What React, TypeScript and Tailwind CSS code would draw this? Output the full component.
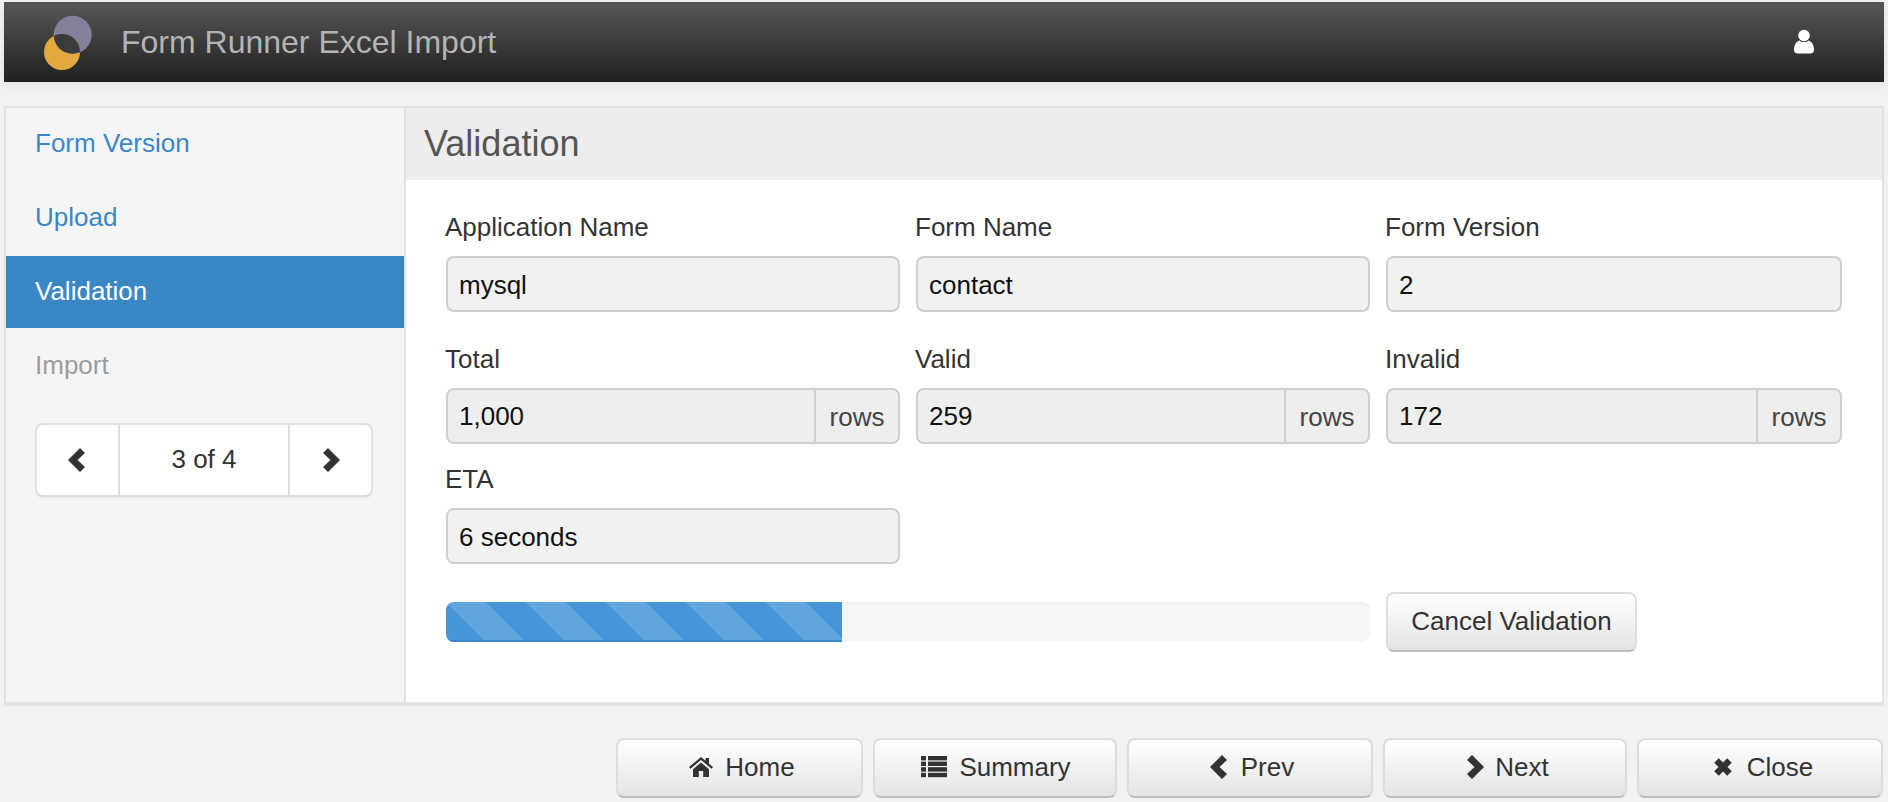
import type { ReactNode } from "react";

function Logo() {
  return (
    <svg width="60" height="60" viewBox="0 0 60 60" className="shrink-0">
      <defs>
        <clipPath id="lens">
          <circle cx="32.7" cy="22.7" r="19" />
        </clipPath>
      </defs>
      <circle cx="22" cy="40" r="18" fill="#e3a83f" />
      <circle cx="32.7" cy="22.7" r="19" fill="#84809a" />
      <circle cx="22" cy="40" r="18" fill="#3b3b3b" clipPath="url(#lens)" />
    </svg>
  );
}

function UserIcon() {
  return (
    <svg width="20" height="26" viewBox="0 0 20 26" fill="#fff">
      <circle cx="10" cy="6.5" r="5.8" />
      <path d="M0 20.5C0 15.5 2.5 12.5 5.5 11.5C7 13.6 13 13.6 14.5 11.5C17.5 12.5 20 15.5 20 20.5C20 23.2 18.6 24.5 16.5 24.5H3.5C1.4 24.5 0 23.2 0 20.5Z" />
    </svg>
  );
}

function ChevronLeft({ blur }: { blur?: boolean }) {
  return (
    <svg width="17" height="24" viewBox="0 0 17 24" fill="#333" className={blur ? "blur-[0.6px]" : ""}>
      <polygon points="12,0 17,5 9.5,12 17,19 12,24 0,12" />
    </svg>
  );
}

function ChevronRight({ blur }: { blur?: boolean }) {
  return (
    <svg width="17" height="24" viewBox="0 0 17 24" fill="#333" className={blur ? "blur-[0.6px]" : ""}>
      <polygon points="5,0 0,5 7.5,12 0,19 5,24 17,12" />
    </svg>
  );
}

function HomeIcon() {
  return (
    <svg width="24" height="20" viewBox="0 0 24 20" fill="#333">
      <polygon points="0,10 12,0 16.5,3.8 16.5,1 20,1 20,6.8 24,10 22.5,11.8 12,3 1.5,11.8" />
      <polygon points="4,12.2 12,5.4 20,12.2 20,20 14.2,20 14.2,14 9.8,14 9.8,20 4,20" />
    </svg>
  );
}

function ListIcon() {
  return (
    <svg width="26" height="22" viewBox="0 0 26 22" fill="#333">
      <rect x="0" y="0" width="5" height="4.4" />
      <rect x="7" y="0" width="19" height="4.4" />
      <rect x="0" y="5.6" width="5" height="4.4" />
      <rect x="7" y="5.6" width="19" height="4.4" />
      <rect x="0" y="11.2" width="5" height="4.4" />
      <rect x="7" y="11.2" width="19" height="4.4" />
      <rect x="0" y="16.8" width="5" height="4.4" />
      <rect x="7" y="16.8" width="19" height="4.4" />
    </svg>
  );
}

function CloseIcon() {
  return (
    <svg width="18" height="18" viewBox="0 0 18 18" stroke="#333" strokeWidth="6.4">
      <path d="M2.5 2.5L15.5 15.5M15.5 2.5L2.5 15.5" />
    </svg>
  );
}

function Field({ label, value, rows, top }: { label: string; value: string; rows?: boolean; top?: boolean }) {
  return (
    <div>
      <div className="mb-[14px] -ml-[1px] h-[30px] text-[26px] leading-[30px] text-[#333]">{label}</div>
      <div
        className={`flex h-[56px] items-center rounded-[8px] border-2 border-[#cfcfcf] text-[26px] text-[#111] ${
          top ? "bg-[#f1f1f1]" : "bg-[#eeeeee]"
        }`}
      >
        <div className={`flex-1 pl-[11px] ${top ? "pt-[3px]" : "pt-[1px]"}`}>{value}</div>
        {rows && (
          <div className="flex h-full w-[84px] items-center justify-center border-l-2 border-[#cfcfcf] pt-[3px] text-[#444]">
            rows
          </div>
        )}
      </div>
    </div>
  );
}

function FooterButton({ icon, text, className }: { icon: ReactNode; text: string; className: string }) {
  return (
    <button
      className={`flex h-[60px] items-center justify-center rounded-[8px] border-2 border-[#dddddd] border-b-[#bdbdbd] bg-linear-to-b from-[#ffffff] to-[#e4e4e4] pb-[2px] text-[26px] text-[#333] ${className}`}
    >
      {icon}
      <span>{text}</span>
    </button>
  );
}

export default function App() {
  return (
    <div className="min-h-[802px] bg-[#f2f2f2] px-[4px] pt-[2px] font-['Liberation_Sans',Arial,sans-serif]">
      <header className="flex h-[80px] items-center bg-linear-to-b from-[#585858] to-[#212121] pl-[36px] pr-[70px] shadow-[0_3px_8px_rgba(0,0,0,0.08)]">
        <Logo />
        <div className="ml-[21px] flex-1 text-[32px] text-[#b4b4b4]">Form Runner Excel Import</div>
        <UserIcon />
      </header>

      <main className="mt-[24px] flex h-[600px] border-2 border-b-4 border-[#e3e3e3] bg-white">
        <aside className="w-[398px] shrink-0 bg-[#f5f5f5] text-[26px]">
          <div className="flex h-[72px] items-center pb-[2px] pl-[29px] text-[#3a87c8]">Form Version</div>
          <div className="mt-[2px] flex h-[72px] items-center pb-[2px] pl-[29px] text-[#3a87c8]">Upload</div>
          <div className="mt-[2px] flex h-[72px] items-center bg-[#3a87c5] pb-[2px] pl-[29px] text-white">Validation</div>
          <div className="mt-[2px] flex h-[72px] items-center pb-[2px] pl-[29px] text-[#9c9c9c]">Import</div>
          <div className="ml-[29px] mt-[21px] flex h-[74px] w-[338px] rounded-[8px] border-2 border-[#e2e2e2] border-b-[#dcdcdc] bg-white text-[#333] shadow-[0_1px_2px_rgba(0,0,0,0.06)]">
            <div className="flex w-[83px] items-center justify-center border-r-2 border-[#dedede] pr-[2px]">
              <ChevronLeft />
            </div>
            <div className="flex flex-1 items-center justify-center pb-[2px]">3 of 4</div>
            <div className="flex w-[83px] items-center justify-center border-l-2 border-[#dedede] pl-[2px]">
              <ChevronRight />
            </div>
          </div>
        </aside>

        <section className="flex-1 border-l-2 border-[#e3e3e3]">
          <div className="flex h-[72px] items-center bg-[#ededed] pl-[18px] text-[36px] text-[#555]">Validation</div>
          <div className="grid grid-cols-[454px_454px_456px] gap-x-[16px] px-[40px] pt-[32px]">
            <div className="mb-[32px]"><Field label="Application Name" value="mysql" top /></div>
            <div className="mb-[32px]"><Field label="Form Name" value="contact" top /></div>
            <div className="mb-[32px]"><Field label="Form Version" value="2" top /></div>
            <div className="mb-[20px]"><Field label="Total" value="1,000" rows /></div>
            <div className="mb-[20px]"><Field label="Valid" value="259" rows /></div>
            <div className="mb-[20px]"><Field label="Invalid" value="172" rows /></div>
            <div className="col-span-3 mb-[28px] grid grid-cols-[454px_454px_456px] gap-x-[16px]">
              <Field label="ETA" value="6 seconds" top />
            </div>
            <div className="col-span-2 flex h-[60px] items-center">
              <div className="h-[40px] w-full overflow-hidden rounded-[8px] bg-[#f6f6f6] shadow-[inset_0_2px_2px_rgba(0,0,0,0.03)]">
                <div className="h-full w-[396px] border-b-2 border-[#3b83c2] bg-[#4596d8] bg-[linear-gradient(45deg,rgba(255,255,255,0.15)_25%,transparent_25%,transparent_50%,rgba(255,255,255,0.15)_50%,rgba(255,255,255,0.15)_75%,transparent_75%,transparent)] bg-size-[80px_80px]" />
              </div>
            </div>
            <div className="flex h-[60px] items-center">
              <button className="h-[60px] w-[251px] rounded-[8px] border-2 border-[#dddddd] border-b-[#bdbdbd] bg-linear-to-b from-[#ffffff] to-[#e4e4e4] pb-[2px] text-[26px] text-[#333]">
                Cancel Validation
              </button>
            </div>
          </div>
        </section>
      </main>

      <footer className="mt-[32px] flex justify-end gap-[10px] pr-[1px]">
        <FooterButton className="w-[247px] gap-[12px] pl-[5px]" text="Home" icon={<HomeIcon />} />
        <FooterButton className="w-[244px] gap-[12px] pl-[2px]" text="Summary" icon={<ListIcon />} />
        <FooterButton className="w-[246px] gap-[14px] pl-[4px]" text="Prev" icon={<ChevronLeft blur />} />
        <FooterButton className="w-[244px] gap-[11px] pl-[6px]" text="Next" icon={<ChevronRight blur />} />
        <FooterButton className="w-[246px] gap-[15px] pl-[7px]" text="Close" icon={<CloseIcon />} />
      </footer>
    </div>
  );
}
